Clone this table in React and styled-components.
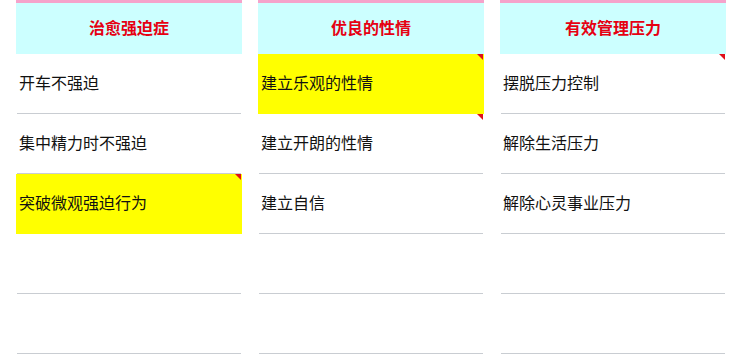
import React from "react";
import styled, { createGlobalStyle } from "styled-components";

const GlobalStyle = createGlobalStyle`
  html, body {
    margin: 0;
    padding: 0;
    background: #ffffff;
  }
  body {
    font-family: "Noto Sans CJK SC", "Noto Sans", sans-serif;
  }
`;

const Board = styled.div`
  display: grid;
  grid-template-columns: repeat(3, 226px);
  column-gap: 16px;
  padding-left: 16px;
  width: 740px;
  box-sizing: border-box;
`;

const Column = styled.section`
  display: flex;
  flex-direction: column;
`;

const Header = styled.h2`
  margin: 0;
  height: 47px;
  padding-bottom: 4px;
  border-top: 3px solid #f5a3cb;
  background: #ccffff;
  color: #e60012;
  font-size: 16px;
  font-weight: 700;
  display: flex;
  align-items: center;
  justify-content: center;
  box-sizing: content-box;
`;

const Row = styled.div`
  position: relative;
  height: 60px;
  box-sizing: border-box;
  padding: 0 3px 5px;
  display: flex;
  align-items: center;
  font-size: 16px;
  color: #111;
  background: ${({ $hot }) =>
    $hot
      ? "#ffff00"
      : "linear-gradient(#c9cdd2, #c9cdd2) no-repeat 1px 100% / calc(100% - 2px) 1px"};

  ${({ $flag }) =>
    $flag &&
    `
    &::after {
      content: "";
      position: absolute;
      top: 0;
      right: 1px;
      width: 0;
      height: 0;
      border-top: 6px solid #e0101a;
      border-left: 6px solid transparent;
    }
  `}
`;

const columns = [
  {
    title: "治愈强迫症",
    items: [
      { text: "开车不强迫" },
      { text: "集中精力时不强迫" },
      { text: "突破微观强迫行为", hot: true, flag: true },
      { text: "" },
      { text: "" },
    ],
  },
  {
    title: "优良的性情",
    items: [
      { text: "建立乐观的性情", hot: true, flag: true },
      { text: "建立开朗的性情", flag: true },
      { text: "建立自信" },
      { text: "" },
      { text: "" },
    ],
  },
  {
    title: "有效管理压力",
    items: [
      { text: "摆脱压力控制", flag: true },
      { text: "解除生活压力" },
      { text: "解除心灵事业压力" },
      { text: "" },
      { text: "" },
    ],
  },
];

export default function App() {
  return (
    <>
      <GlobalStyle />
      <Board>
        {columns.map((col) => (
          <Column key={col.title}>
            <Header>{col.title}</Header>
            {col.items.map((item, i) => (
              <Row key={i} $hot={item.hot} $flag={item.flag}>
                {item.text}
              </Row>
            ))}
          </Column>
        ))}
      </Board>
    </>
  );
}
